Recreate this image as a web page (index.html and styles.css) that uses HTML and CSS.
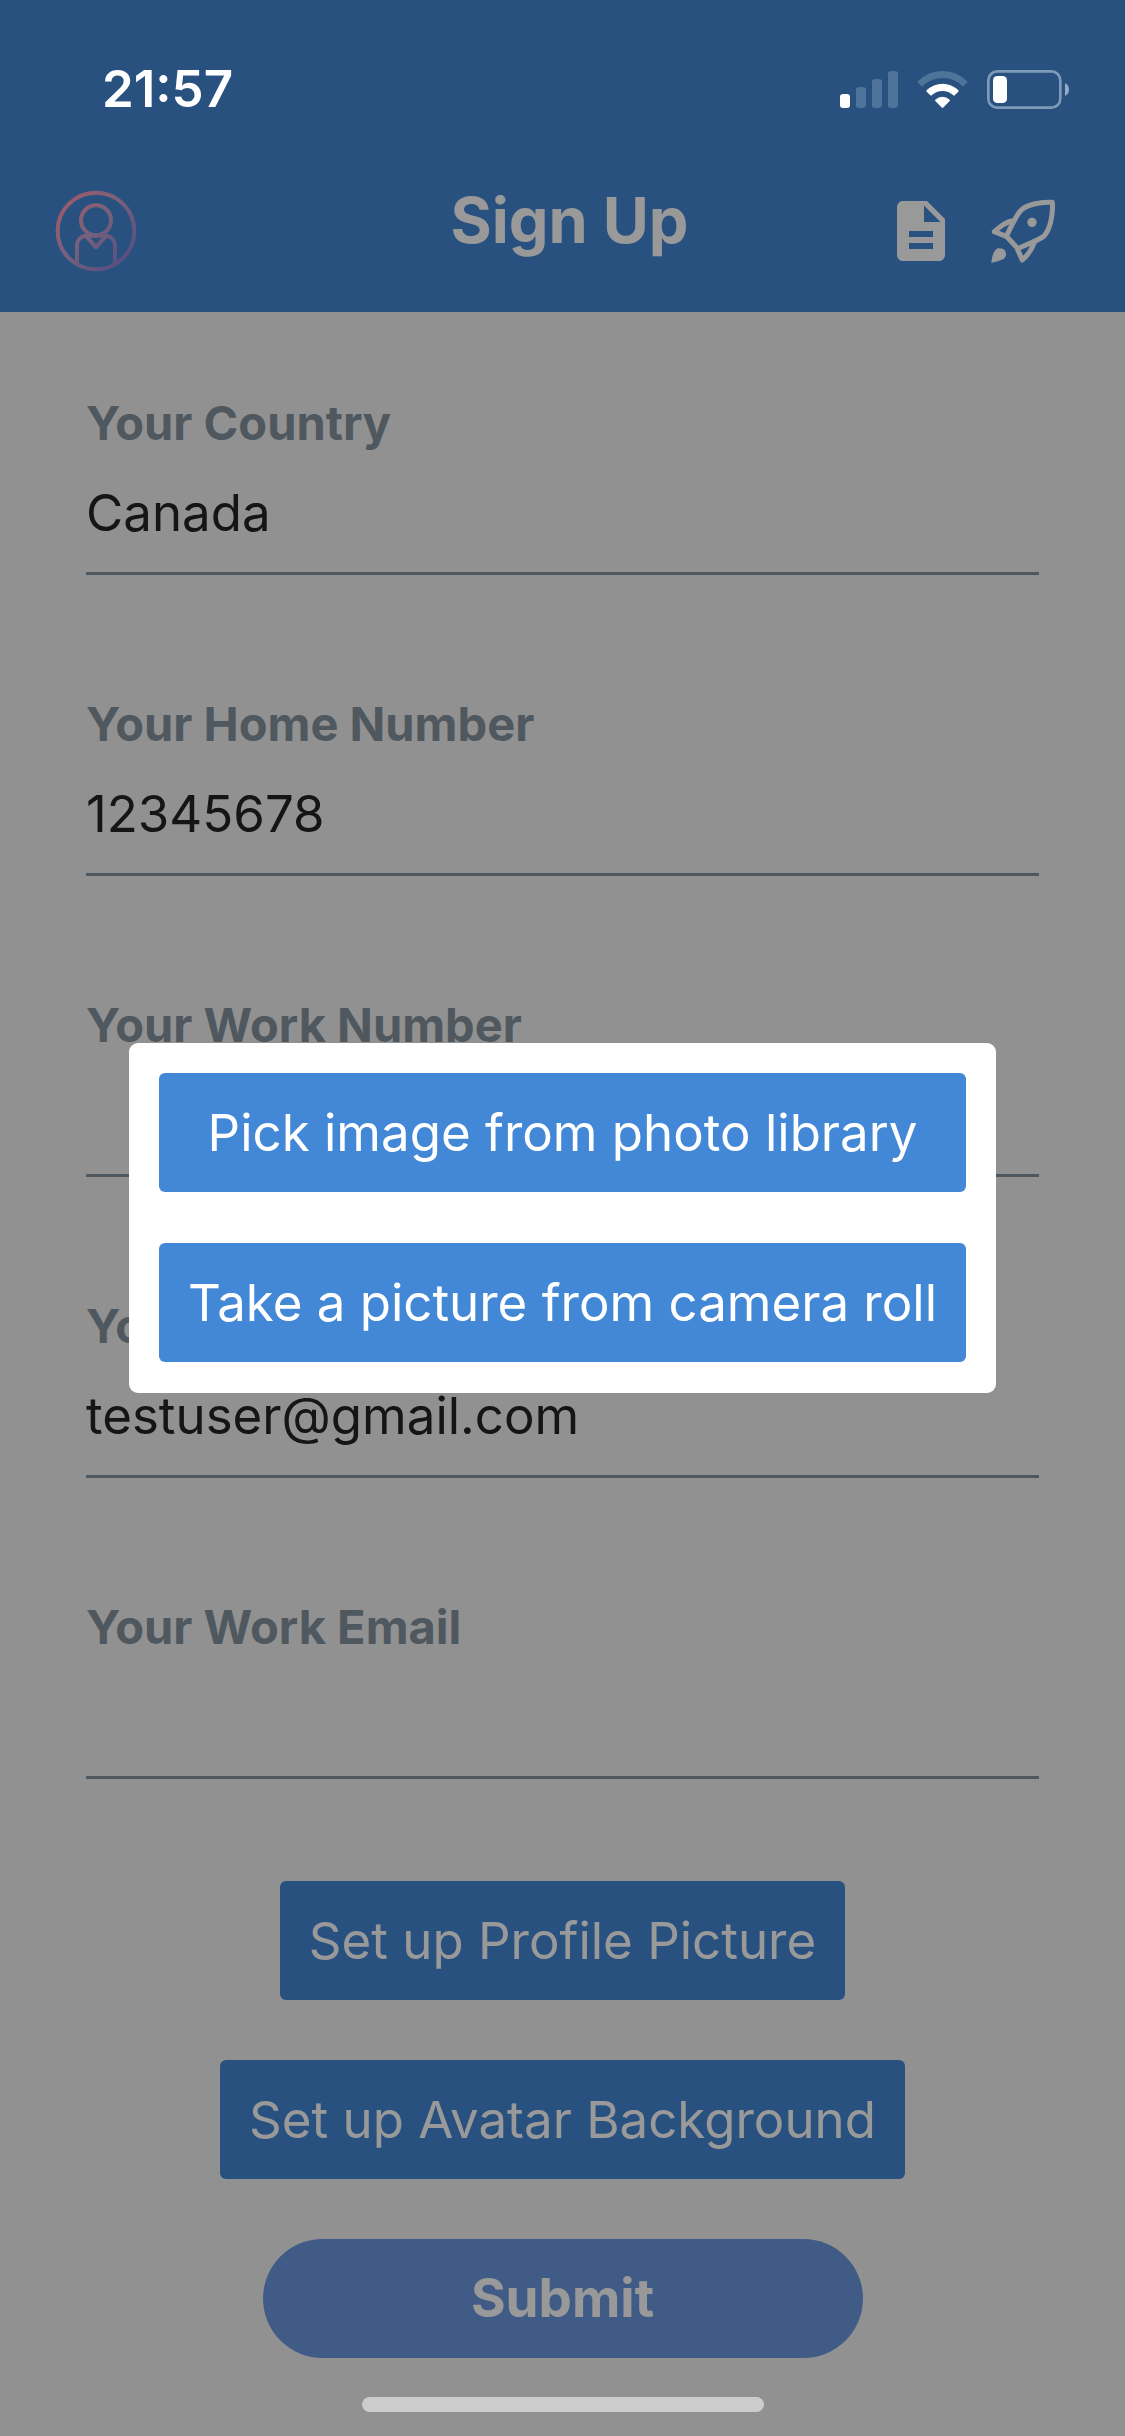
FILE: index.html
```html
<!DOCTYPE html>
<html lang="en">
<head>
<meta charset="utf-8">
<meta name="viewport" content="width=device-width, initial-scale=1">
<title>Sign Up</title>
<link rel="stylesheet" href="styles.css">
</head>
<body>
<div class="status-bar">
  <time class="clock">21:57</time>
  <div class="status-icons">
    <svg class="signal" viewBox="0 0 58 37" aria-hidden="true">
      <rect x="0" y="23" width="10" height="14" rx="3" fill="#fff"/>
      <g fill="#4f7499">
        <rect x="16" y="16" width="10" height="21" rx="3"/>
        <rect x="32" y="8" width="10" height="29" rx="3"/>
        <rect x="48" y="0" width="10" height="37" rx="3"/>
      </g>
    </svg>
    <svg class="wifi" viewBox="352 90 151 111" aria-hidden="true">
      <path fill="#4f7499" d="M354 121Q352 123 354 125L364 135Q366 137 368 135Q393 111 427.500 111Q462 111 487 135Q489 137 491 135L501 125Q503 123 501 121Q470 90 427.500 90Q385 90 354 121Z"/>
      <path fill="#fff" d="M380 148Q378 150 380 152L391 163Q393 165 395 163Q409 150 427.500 150Q446 150 460 163Q462 165 464 163L475 152Q477 150 475 148Q455 128 427.500 128Q400 128 380 148Z"/>
      <path fill="#fff" d="M406 176Q404 178 406 180L425 199.500Q427.500 202 430 199.500L449 180Q451 178 449 176Q440 167 427.500 167Q415 167 406 176Z"/>
    </svg>
    <svg class="battery" viewBox="561 87 246 117" aria-hidden="true">
      <rect x="565" y="91" width="216" height="109" rx="27" fill="none" stroke="#7d9ab8" stroke-width="8"/>
      <rect x="579" y="105" width="42" height="81" rx="13" fill="#fff"/>
      <path fill="#93abc4" d="M795 126Q807 132 807 145.500Q807 159 795 165Z"/>
    </svg>
  </div>
</div>

<header class="app-header">
  <a class="header-side avatar-link" href="#profile" aria-label="Profile">
    <svg class="avatar" viewBox="45 449 246 246" fill="none" stroke="url(#avatar-tone)" stroke-width="12" stroke-linejoin="round">
      <defs>
        <linearGradient id="avatar-tone" gradientUnits="userSpaceOnUse" x1="80" y1="490" x2="250" y2="665">
          <stop offset="0" stop-color="#ff97b4"/>
          <stop offset=".4" stop-color="#cda3ce"/>
          <stop offset="1" stop-color="#8f86d6"/>
        </linearGradient>
      </defs>
      <circle cx="168" cy="572" r="115"/>
      <circle cx="168" cy="540" r="45"/>
      <path d="M111 671V617C111 600 122 588 137 586L168 621L199 586C214 588 225 600 225 617V671M137 586H199"/>
    </svg>
  </a>
  <h1 class="title">Sign Up</h1>
  <nav class="header-side header-actions">
    <a href="#document" aria-label="Document">
      <svg class="doc" viewBox="0 0 24 24" fill="#fff"><path d="M14 2H6c-1.100 0-1.990.9-1.990 2L4 20c0 1.100.89 2 1.990 2H18c1.100 0 2-.9 2-2V8l-6-6zm2 16H8v-2h8v2zm0-4H8v-2h8v2zm-3-5V3.500L18.500 9H13z"/></svg>
    </a>
    <a href="#launch" aria-label="Launch">
      <svg class="rocket" viewBox="570 473 198 198" fill="none" stroke="#fff" stroke-width="15" stroke-linejoin="round">
        <path d="M757 486C722 484 678 492 660 513C644 533 633 561 619 588L654 625C681 611 709 603 731 588C749 571 760 525 757 486Z"/>
        <path d="M638 541C616 545 600 558 583 574L619 588M703 606C695 630 684 644 667 659L652 626"/>
        <circle cx="696" cy="546" r="14" fill="#fff" stroke="none"/>
        <path d="M574 668C576 649 580 635 587 628C595 621 608 623 614 630C621 639 619 651 609 657C600 662 588 664 574 668Z" fill="#fff" stroke="none"/>
      </svg>
    </a>
  </nav>
</header>

<main>
  <form class="form">
    <div class="fields">
      <div class="field"><label for="country">Your Country</label><input id="country" type="text" value="Canada"></div>
      <div class="field"><label for="home-number">Your Home Number</label><input id="home-number" type="tel" value="12345678"></div>
      <div class="field"><label for="work-number">Your Work Number</label><input id="work-number" type="tel"></div>
      <div class="field"><label for="home-email">Your Home Email</label><input id="home-email" type="email" value="testuser@gmail.com"></div>
      <div class="field"><label for="work-email">Your Work Email</label><input id="work-email" type="email"></div>
    </div>
    <div class="actions">
      <button class="button" type="button">Set up Profile Picture</button>
      <button class="button" type="button">Set up Avatar Background</button>
      <button class="button submit" type="submit">Submit</button>
    </div>
  </form>
</main>

<div class="backdrop">
  <div class="sheet" role="dialog" aria-modal="true" aria-label="Choose a picture">
    <button class="button" type="button">Pick image from photo library</button>
    <button class="button" type="button">Take a picture from camera roll</button>
  </div>
</div>
<div class="home-indicator"></div>
</body>
</html>
```

FILE: styles.css
```css
* {
  box-sizing: border-box;
}

:root {
  --blue: #4388d6;
  --muted: #86939e;
}

body {
  margin: 0;
  min-height: 100vh;
  background: #f2f2f2;
  font-family: Inter, "Liberation Sans", sans-serif;
}

svg {
  display: block;
}

/* The system status stays bright above the modal backdrop. */
.status-bar {
  position: relative;
  z-index: 2;
  display: flex;
  justify-content: space-between;
  align-items: center;
  height: 132px;
  padding: 46px 56px 0 102px;
  color: #fff;
}

.clock {
  font-size: 51px;
  line-height: 60px;
  font-weight: 600;
}

.status-icons {
  display: flex;
  align-items: center;
  gap: 19px;
}

.signal {
  width: 58px;
  height: 37px;
}

.wifi {
  width: 51px;
  height: 37px;
}

.battery {
  width: 82px;
  height: 39px;
}

.app-header {
  display: grid;
  grid-template-columns: 1fr auto 1fr;
  align-items: center;
  height: 312px;
  margin-top: -132px;
  padding: 128px 69px 0 55px;
  background: var(--blue);
}

.header-side {
  padding-top: 22px;
}

.avatar {
  width: 82px;
  height: 82px;
}

.title {
  margin: 0;
  padding-left: 28px;
  color: #fff;
  font-size: 63px;
  line-height: 80px;
  font-weight: 700;
}

.header-actions {
  display: flex;
  justify-content: flex-end;
  align-items: center;
  gap: 33px;
}

.doc {
  width: 72px;
  height: 72px;
}

.rocket {
  width: 66px;
  height: 66px;
}

.form {
  padding: 82px 86px 78px;
}

.fields {
  display: grid;
  gap: 120px;
}

.field {
  display: grid;
}

.field label {
  color: var(--muted);
  font-size: 47px;
  line-height: 58px;
  font-weight: 700;
}

.field input {
  width: 100%;
  height: 123px;
  padding: 0;
  border: 0;
  border-bottom: 3px solid var(--muted);
  border-radius: 0;
  background: none;
  color: #242424;
  font: 400 51px Inter, "Liberation Sans", sans-serif;
  outline: 0;
}

.actions {
  display: flex;
  flex-direction: column;
  align-items: center;
  gap: 60px;
  margin-top: 102px;
}

.button {
  padding: 28px 29px;
  border: 0;
  border-radius: 6px;
  background: var(--blue);
  color: #fff;
  font: 400 51px/63px Inter, "Liberation Sans", sans-serif;
}

.submit {
  width: 600px;
  max-width: 100%;
  border-radius: 60px;
  background: #6c98df;
  font-size: 53px;
  font-weight: 700;
}

.backdrop {
  position: fixed;
  inset: 0;
  z-index: 1;
  display: grid;
  place-items: center;
  background: rgba(0, 0, 0, .4);
}

.sheet {
  display: grid;
  gap: 51px;
  padding: 30px 30px 31px;
  border-radius: 9px;
  background: #fff;
}

.home-indicator {
  position: fixed;
  z-index: 2;
  left: 50%;
  bottom: 24px;
  width: 402px;
  height: 15px;
  margin-left: -201px;
  border-radius: 8px;
  background: #ccc;
}
```
